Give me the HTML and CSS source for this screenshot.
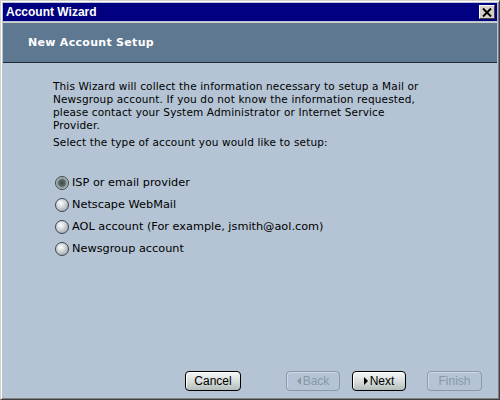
FILE: index.html
```html
<!DOCTYPE html>
<html lang="en">
<head>
  <meta charset="UTF-8">
  <title>Account Wizard</title>
  <link rel="stylesheet" href="styles.css">
</head>
<body>

  <div class="window">
    <div class="titlebar">
      <span class="title">Account Wizard</span>
      <span class="close">
        <svg width="10" height="9" viewBox="0 0 10 9">
          <path d="M1 0.5 L9 8.5 M9 0.5 L1 8.5" stroke="#000" stroke-width="2"/>
        </svg>
      </span>
    </div>

    <div class="banner">New Account Setup</div>

    <div class="content">
      <p class="intro">This Wizard will collect the information necessary to setup a Mail or<br>
        Newsgroup account. If you do not know the information requested,<br>
        please contact your System Administrator or Internet Service<br>
        Provider.</p>
      <p class="prompt">Select the type of account you would like to setup:</p>

      <div class="options">
        <label class="option"><span class="radio checked"></span>ISP or email provider</label>
        <label class="option"><span class="radio"></span>Netscape WebMail</label>
        <label class="option"><span class="radio"></span>AOL account (For example, jsmith@aol.com)</label>
        <label class="option"><span class="radio"></span>Newsgroup account</label>
      </div>
    </div>

    <div class="buttons">
      <button class="btn cancel">Cancel</button>
      <button class="btn back disabled"><span class="arrow left"></span>Back</button>
      <button class="btn next"><span class="arrow right"></span>Next</button>
      <button class="btn finish disabled">Finish</button>
    </div>
  </div>

</body>
</html>
```

FILE: styles.css
```css
* {
  margin: 0;
  padding: 0;
  box-sizing: border-box;
}

body {
  width: 500px;
  height: 400px;
  overflow: hidden;
  font-family: "DejaVu Sans", Verdana, sans-serif;
  font-size: 10.5px;
  color: #000;
}

.window {
  width: 500px;
  height: 400px;
  display: flex;
  flex-direction: column;
  background: #b4c4d4;
  border-top: 1px solid #d4d0c8;
  border-left: 1px solid #d4d0c8;
  border-right: 1px solid #404040;
  border-bottom: 1px solid #404040;
  box-shadow: inset 1px 1px 0 #fff, inset -1px -1px 0 #808080;
  padding: 2px;
}

.titlebar {
  height: 18px;
  background: #000080;
  color: #fff;
  display: flex;
  align-items: center;
  justify-content: space-between;
  padding: 0 2px 0 3px;
}

.title {
  font-family: "Liberation Sans", Arial, sans-serif;
  font-weight: bold;
  font-size: 12px;
}

.close {
  width: 16px;
  height: 14px;
  background: #d4d0c8;
  border-top: 1px solid #fff;
  border-left: 1px solid #fff;
  border-right: 1px solid #404040;
  border-bottom: 1px solid #404040;
  display: flex;
  align-items: center;
  justify-content: center;
}

.banner {
  height: 41px;
  margin-top: 1px;
  border-top: 1px solid #d4d0c8;
  background: #5e7891;
  border-bottom: 1px solid #1e2832;
  color: #fff;
  font-weight: bold;
  font-size: 11px;
  letter-spacing: 0.3px;
  display: flex;
  align-items: center;
  padding-left: 25px;
}

.content {
  flex: 1;
  padding: 17px 0 0 50px;
}

.intro {
  line-height: 13px;
  letter-spacing: 0.15px;
}

.prompt {
  margin-top: 4px;
  line-height: 13px;
  letter-spacing: 0.15px;
}

.options {
  margin-top: 27px;
  display: flex;
  flex-direction: column;
  gap: 9px;
  font-size: 11.3px;
}

.option {
  display: flex;
  align-items: center;
  gap: 3px;
  height: 13px;
  padding-left: 2px;
}

.radio {
  flex-shrink: 0;
  width: 14px;
  height: 14px;
  border-radius: 50%;
  border: 1px solid #3a4650;
  background: radial-gradient(circle at 40% 35%, #ffffff 0, #d8dcde 35%, #8a9296 100%);
}

.radio.checked {
  background: radial-gradient(circle, #3c4a4a 0, #5c6a6a 40%, #a8b0b0 60%, #d8dcdc 100%);
}

.buttons {
  display: flex;
  align-items: flex-end;
  padding: 0 0 6px 182px;
}

.btn {
  flex-shrink: 0;
  width: 54px;
  height: 20px;
  border: 1px solid #000;
  border-radius: 4px;
  background: linear-gradient(#f4f6f6, #d8dedc 50%, #b4bebc);
  box-shadow: inset 1px 1px 0 #fff;
  font-family: "Liberation Sans", Arial, sans-serif;
  font-size: 12px;
  color: #000;
  display: flex;
  align-items: center;
  justify-content: center;
  gap: 2px;
}

.btn.disabled {
  border-color: #8a98a8;
  background: #b4c4d4;
  box-shadow: inset 1px 1px 0 #d0dae4;
  color: #8898a8;
}

.cancel {
  width: 56px;
}

.back {
  margin-left: 45px;
}

.next {
  margin-left: 12px;
}

.finish {
  width: 55px;
  margin-left: 21px;
}

.arrow {
  width: 0;
  height: 0;
  border-top: 4px solid transparent;
  border-bottom: 4px solid transparent;
}

.arrow.right {
  border-left: 4px solid #000;
}

.arrow.left {
  border-right: 4px solid #8898a8;
}
```
